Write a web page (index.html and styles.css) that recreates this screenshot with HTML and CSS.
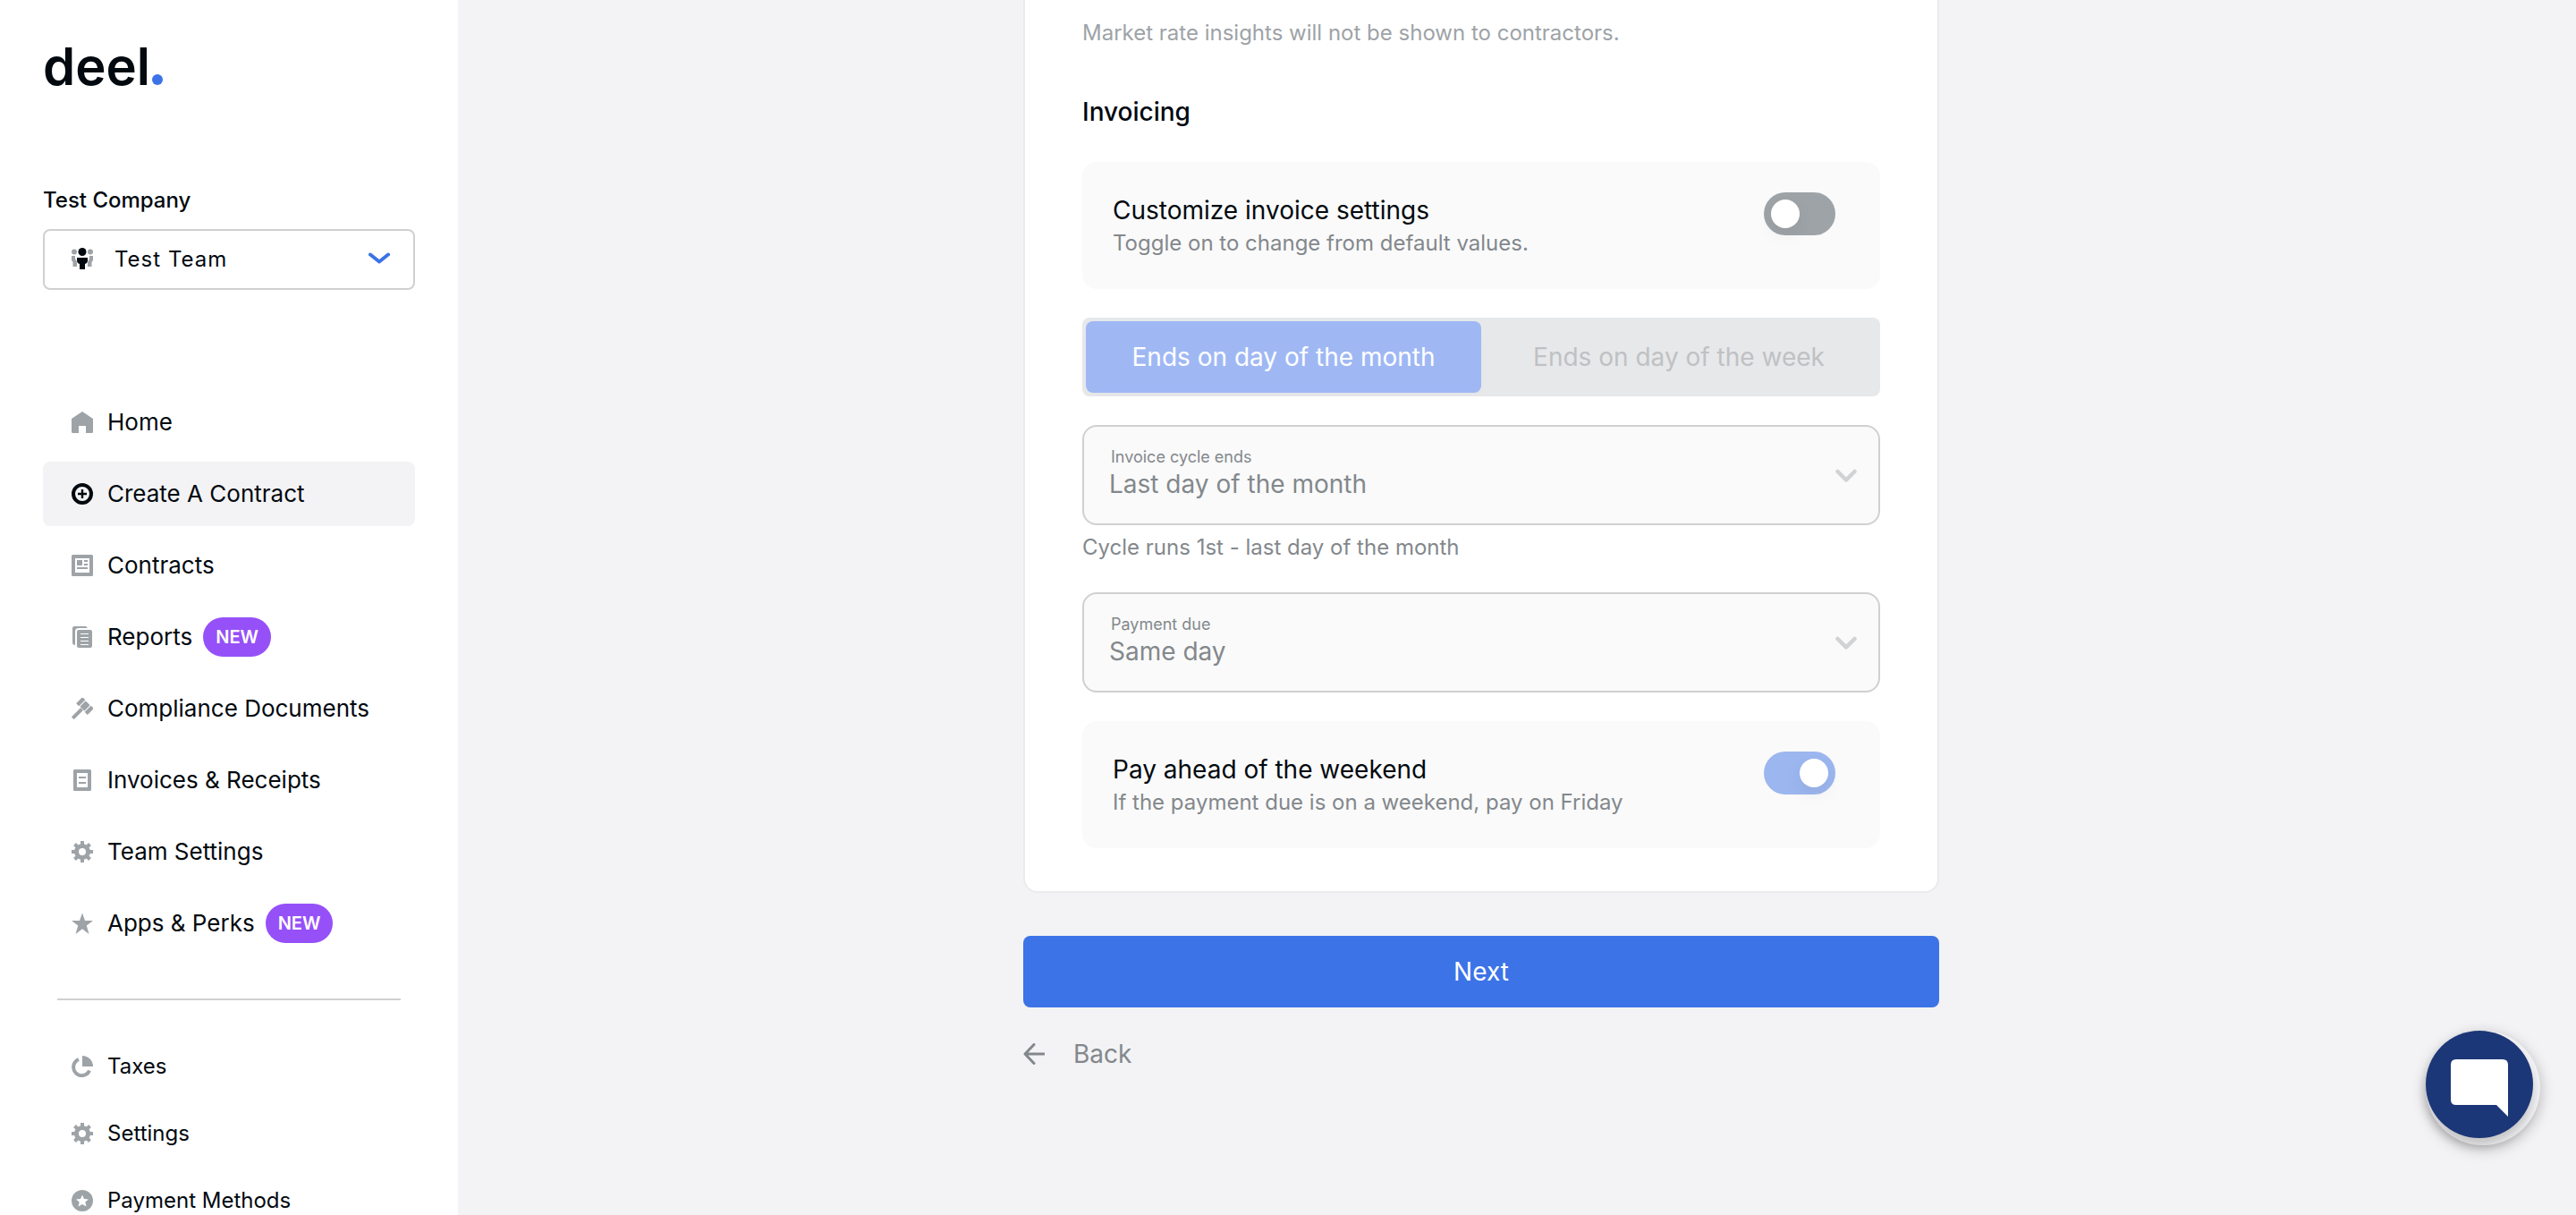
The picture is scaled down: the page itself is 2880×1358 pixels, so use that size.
FILE: index.html
```html
<!DOCTYPE html>
<html lang="en">
<head>
<meta charset="utf-8">
<meta name="viewport" content="width=device-width, initial-scale=1">
<title>Create A Contract</title>
<link rel="stylesheet" href="styles.css">
</head>
<body>
<svg class="sprite" aria-hidden="true">
  <symbol id="gear" viewBox="0 0 24 24">
    <g fill="none" stroke="currentColor" stroke-width="4">
      <circle cx="12" cy="12" r="6.5" stroke-width="5"/>
      <path d="M12 0v5M12 19v5M0 12h5M19 12h5M3.5 3.5l3 3M17.500 17.500l3 3M3.500 20.500l3-3M17.500 6.500l3-3"/>
    </g>
  </symbol>
  <symbol id="chevron" viewBox="0 0 24 14">
    <path d="M2 2.500l10 8 10-8" fill="none" stroke="currentColor" stroke-width="4" stroke-linecap="round" stroke-linejoin="round"/>
  </symbol>
  <symbol id="chevron-deep" viewBox="0 0 24 16">
    <path d="M2.500 3l9.500 9.500L21.500 3" fill="none" stroke="currentColor" stroke-width="4.500" stroke-linecap="round" stroke-linejoin="round"/>
  </symbol>
</svg>
<div class="app">
  <aside class="sidebar">
    <a class="logo" href="#" aria-label="deel."><span>deel</span><span class="logo-dot"></span></a>
    <label class="company" for="team">Test Company</label>
    <div class="team">
      <svg class="icon team-icon" viewBox="0 0 24 24" aria-hidden="true">
        <g fill="#9ea3a7"><circle cx="3" cy="4.500" r="3"/><circle cx="21" cy="4.500" r="3"/><path d="M0 9h4v3l2 4v5H1.500v-5L0 14zM24 9h-4v3l-2 4v5h4.500v-5l1.500-2z"/></g>
        <g fill="#02090f"><circle cx="12" cy="4.500" r="4.500"/><path d="M6 11h12v3c0 2-1 3.500-3 4v6H9v-6c-2-.5-3-2-3-4z"/></g>
      </svg>
      <select id="team" class="team-select"><option>Test Team</option></select>
      <svg class="team-chevron" aria-hidden="true"><use href="#chevron"/></svg>
    </div>
    <nav class="nav">
      <a class="nav-item" href="#"><svg class="icon" viewBox="0 0 24 24"><path fill="currentColor" d="M0 8 12 0l12 8v14.500q0 1.500-1.500 1.500H16v-8H8v8H1.500Q0 24 0 22.500z"/></svg>Home</a>
      <a class="nav-item active" href="#" aria-current="page"><svg class="icon" viewBox="0 0 24 24"><circle cx="12" cy="12" r="10" fill="none" stroke="currentColor" stroke-width="4"/><path d="M12 7v10M7 12h10" stroke="currentColor" stroke-width="2.400"/></svg>Create A Contract</a>
      <a class="nav-item" href="#"><svg class="icon" viewBox="0 0 24 24"><path fill="currentColor" fill-rule="evenodd" d="M1.500 0h21Q24 0 24 1.500v21q0 1.500-1.500 1.500h-21Q0 24 0 22.500v-21Q0 0 1.500 0zM4 4v16h16V4z"/><path fill="currentColor" d="M6 6h6v6H6zM14 6h4v2h-4zM14 10h4v2h-4zM6 14h12v2H6z"/></svg>Contracts</a>
      <a class="nav-item" href="#"><svg class="icon" viewBox="0 0 24 24"><path fill="currentColor" d="M3 0h13l2 2H8Q4 2 4 6v15q-3 0-3-3V2q0-2 2-2z"/><path fill="currentColor" fill-rule="evenodd" d="M8 4h13q2 0 2 2v16q0 2-2 2H8q-2 0-2-2V6q0-2 2-2zM10 8v1h9V8zM10 12v1h9v-1zM10 16v1h9v-1zM10 20v1h9v-1z"/></svg>Reports<span class="badge">NEW</span></a>
      <a class="nav-item" href="#"><svg class="icon" viewBox="0 0 24 24"><g transform="rotate(45 15 9)" fill="currentColor"><rect x="6" y="4" width="4.500" height="10"/><rect x="11.500" y="4.500" width="7" height="9" rx="1"/><rect x="19.500" y="4" width="4.500" height="10"/><rect x="13" y="14" width="4" height="14.500" rx="1"/></g></svg>Compliance Documents</a>
      <a class="nav-item" href="#"><svg class="icon" viewBox="0 0 24 24"><path fill="currentColor" fill-rule="evenodd" d="M3.500 0h17Q22 0 22 1.500v21q0 1.500-1.500 1.500h-17Q2 24 2 22.500v-21Q2 0 3.500 0zM6 4v16h12V4zM8 8v2h8V8zM8 14v2h8v-2z"/></svg>Invoices &amp; Receipts</a>
      <a class="nav-item" href="#"><svg class="icon"><use href="#gear"/></svg>Team Settings</a>
      <a class="nav-item" href="#"><svg class="icon" viewBox="0 0 24 24"><path fill="currentColor" d="M12 .5l3 8.500h9l-7.200 5.400L19.500 24 12 18.200 4.500 24l2.700-9.600L0 9h9z"/></svg>Apps &amp; Perks<span class="badge">NEW</span></a>
    </nav>
    <hr class="divider">
    <nav class="nav nav-small">
      <a class="nav-item" href="#"><svg class="icon" viewBox="0 0 24 24"><path fill="currentColor" d="M12 0a12 12 0 0 1 12 12H12z"/><path d="M8 4.200A9.300 9.300 0 1 0 20 16.500" fill="none" stroke="currentColor" stroke-width="4"/></svg>Taxes</a>
      <a class="nav-item" href="#"><svg class="icon"><use href="#gear"/></svg>Settings</a>
      <a class="nav-item" href="#"><svg class="icon" viewBox="0 0 24 24"><circle cx="12" cy="12" r="12" fill="currentColor"/><path fill="#fff" d="M12 5.500l2 4.500 5 .4-3.700 3.200 1.200 4.900L12 15.900l-4.500 2.600 1.200-4.900L5 10.400l5-.4z"/></svg>Payment Methods</a>
    </nav>
  </aside>

  <main class="main">
    <form class="form">
      <section class="card">
        <p class="hint">Market rate insights will not be shown to contractors.</p>
        <h2 class="heading">Invoicing</h2>
        <div class="fields">
          <div class="setting">
            <label class="setting-text" for="customize"><span class="setting-title">Customize invoice settings</span><span class="setting-sub">Toggle on to change from default values.</span></label>
            <input class="toggle" id="customize" type="checkbox">
          </div>
          <div class="segments">
            <button class="segment selected" type="button" disabled>Ends on day of the month</button>
            <button class="segment" type="button" disabled>Ends on day of the week</button>
          </div>
          <div class="field-group">
            <div class="field">
              <label class="field-label" for="cycle">Invoice cycle ends</label>
              <select class="field-select" id="cycle" disabled><option>Last day of the month</option></select>
              <svg class="field-chevron" aria-hidden="true"><use href="#chevron-deep"/></svg>
            </div>
            <p class="helper">Cycle runs 1st - last day of the month</p>
          </div>
          <div class="field">
            <label class="field-label" for="due">Payment due</label>
            <select class="field-select" id="due" disabled><option>Same day</option></select>
            <svg class="field-chevron" aria-hidden="true"><use href="#chevron-deep"/></svg>
          </div>
          <div class="setting">
            <label class="setting-text" for="weekend"><span class="setting-title">Pay ahead of the weekend</span><span class="setting-sub">If the payment due is on a weekend, pay on Friday</span></label>
            <input class="toggle" id="weekend" type="checkbox" checked disabled>
          </div>
        </div>
      </section>
      <button class="next" type="button">Next</button>
      <a class="back" href="#"><svg class="icon" viewBox="0 0 24 24" aria-hidden="true"><path d="M23 12H2M12 1.500 2 12l10 10.500" fill="none" stroke="currentColor" stroke-width="3" stroke-linecap="round" stroke-linejoin="round"/></svg>Back</a>
    </form>
  </main>
</div>
<button class="chat" type="button" aria-label="Open chat">
  <span class="chat-disc"><svg class="chat-icon" viewBox="0 0 64 64" aria-hidden="true"><path fill="#fff" d="M6 0h52q6 0 6 6v58L51 51H6q-6 0-6-6V6q0-6 6-6z"/></svg></span>
</button>
</body>
</html>
```

FILE: styles.css
```css
* {
  box-sizing: border-box;
}

body {
  margin: 0;
  background: #f3f3f5;
  color: #02090f;
  font-family: Inter, "Liberation Sans", sans-serif;
  font-optical-sizing: none;
  font-size: 24px;
  line-height: 32px;
}

p,
h2 {
  margin: 0;
}

a {
  color: inherit;
  text-decoration: none;
}

button,
select {
  font: inherit;
}

.sprite {
  display: none;
}

.app {
  display: flex;
  height: 100vh;
  overflow: hidden;
}

.icon {
  flex: none;
  width: 24px;
  height: 24px;
}

/* Sidebar */

.sidebar {
  flex: none;
  width: 512px;
  padding: 46px 48px 0;
  background: #fff;
}

.logo {
  display: flex;
  align-items: baseline;
  gap: 2px;
  height: 56px;
  font-size: 58px;
  font-weight: 600;
  line-height: 56px;
}

.logo-dot {
  width: 12px;
  height: 12px;
  border-radius: 50%;
  background: #3c73e7;
}

.company {
  display: block;
  margin: 106px 0 16px;
  font-weight: 500;
}

.team {
  position: relative;
}

.team-select {
  appearance: none;
  display: block;
  width: 100%;
  height: 68px;
  padding: 0 78px;
  border: 2px solid #d0d0d0;
  border-radius: 8px;
  background: #fff;
  color: #02090f;
  letter-spacing: 1px;
}

.team-icon,
.team-chevron {
  position: absolute;
  pointer-events: none;
}

.team-icon {
  top: 21px;
  left: 32px;
}

.team-chevron {
  top: 26px;
  right: 28px;
  width: 24px;
  height: 14px;
  color: #3c73e7;
}

.nav {
  display: flex;
  flex-direction: column;
  gap: 8px;
  margin-top: 112px;
  font-size: 26px;
}

.nav-item {
  display: flex;
  align-items: center;
  height: 72px;
  padding: 0 32px;
  border-radius: 8px;
}

.nav-item .icon {
  margin-right: 16px;
  color: #9ea3a7;
}

.nav-item.active {
  background: #f3f3f5;
}

.nav-item.active .icon {
  color: #02090f;
}

.badge {
  margin-left: 12px;
  padding: 0 14px;
  border-radius: 22px;
  background: #9650f8;
  color: #fff;
  font-size: 20px;
  font-weight: 600;
  line-height: 44px;
}

.divider {
  height: 2px;
  margin: 48px 16px 0;
  border: 0;
  background: #d0d0d0;
}

.nav-small {
  margin-top: 40px;
  font-size: 24px;
}

.nav-small .nav-item {
  height: 67px;
}

/* Contract form */

.main {
  flex: 1;
  padding-right: 80px;
}

.form {
  max-width: 1024px;
  margin: 0 auto;
}

.card {
  padding: 21px 64px 48px;
  border: 2px solid #eaeaef;
  border-top: 0;
  border-radius: 0 0 16px 16px;
  background: #fff;
}

.hint {
  color: #9ea3a7;
}

.heading {
  margin: 56px 0 40px;
  font-size: 28px;
  font-weight: 500;
  line-height: 32px;
}

.fields {
  display: flex;
  flex-direction: column;
  gap: 32px;
}

.setting {
  display: flex;
  align-items: flex-start;
  justify-content: space-between;
  min-height: 142px;
  padding: 34px 50px 34px 34px;
  border-radius: 16px;
  background: #fafafa;
}

.setting-text {
  display: flex;
  flex-direction: column;
  gap: 3px;
}

.setting-title {
  font-size: 28px;
  line-height: 40px;
}

.setting-sub {
  color: #83888c;
  line-height: 28px;
}

.toggle {
  appearance: none;
  width: 80px;
  height: 48px;
  margin: 0;
  padding: 8px;
  border-radius: 24px;
  background: #9ea3a7;
}

.toggle::before {
  content: "";
  display: block;
  width: 32px;
  height: 32px;
  border-radius: 50%;
  background: #fff;
  box-shadow: 0 8px 20px rgba(0, 0, 0, 0.06);
}

.toggle:checked {
  background: #9cb6ef;
}

.toggle:checked::before {
  margin-left: auto;
}

.segments {
  display: flex;
  padding: 4px;
  border-radius: 8px;
  background: #e7e8ea;
}

.segment {
  flex: 1;
  height: 80px;
  padding: 0;
  border: 0;
  border-radius: 8px;
  background: none;
  color: #bfc1c3;
  font-size: 28px;
}

.segment.selected {
  background: #9fb8f4;
  box-shadow: 0 6px 12px rgba(0, 0, 0, 0.01);
  color: #fff;
}

.field {
  position: relative;
}

.field-label {
  position: absolute;
  top: 24px;
  left: 32px;
  color: #83888c;
  font-size: 18px;
  line-height: 24px;
}

.field-select {
  appearance: none;
  display: block;
  width: 100%;
  height: 112px;
  padding: 32px 80px 12px 28px;
  border: 2px solid #d0d0d0;
  border-radius: 16px;
  background: #fafafa;
  color: #83888c;
  font-size: 28px;
  opacity: 1;
}

.field-chevron {
  position: absolute;
  top: 49px;
  right: 26px;
  width: 24px;
  height: 16px;
  color: #d0d2d3;
  pointer-events: none;
}

.helper {
  margin: 9px 0 2px;
  color: #83888c;
}

.next {
  display: block;
  width: 100%;
  height: 80px;
  margin: 48px 0 32px;
  border: 0;
  border-radius: 8px;
  background: #3c73e7;
  color: #fff;
  font-size: 28px;
}

.back {
  display: inline-flex;
  align-items: center;
  gap: 32px;
  color: #83888c;
  font-size: 28px;
  line-height: 40px;
}

/* Chat launcher */

.chat {
  position: fixed;
  right: 40px;
  bottom: 78px;
  width: 128px;
  height: 128px;
  padding: 0;
  border: 0;
  border-radius: 50%;
  background: #f3f3f5;
  box-shadow: 0 4px 16px rgba(0, 0, 0, 0.25);
}

.chat-disc {
  display: flex;
  align-items: center;
  justify-content: center;
  width: 120px;
  height: 120px;
  margin-bottom: 8px;
  border-radius: 50%;
  background: #1c3777;
  box-shadow: 0 8px 12px rgba(0, 0, 0, 0.2);
}

.chat-icon {
  width: 64px;
  height: 64px;
  margin-top: 8px;
}
```
